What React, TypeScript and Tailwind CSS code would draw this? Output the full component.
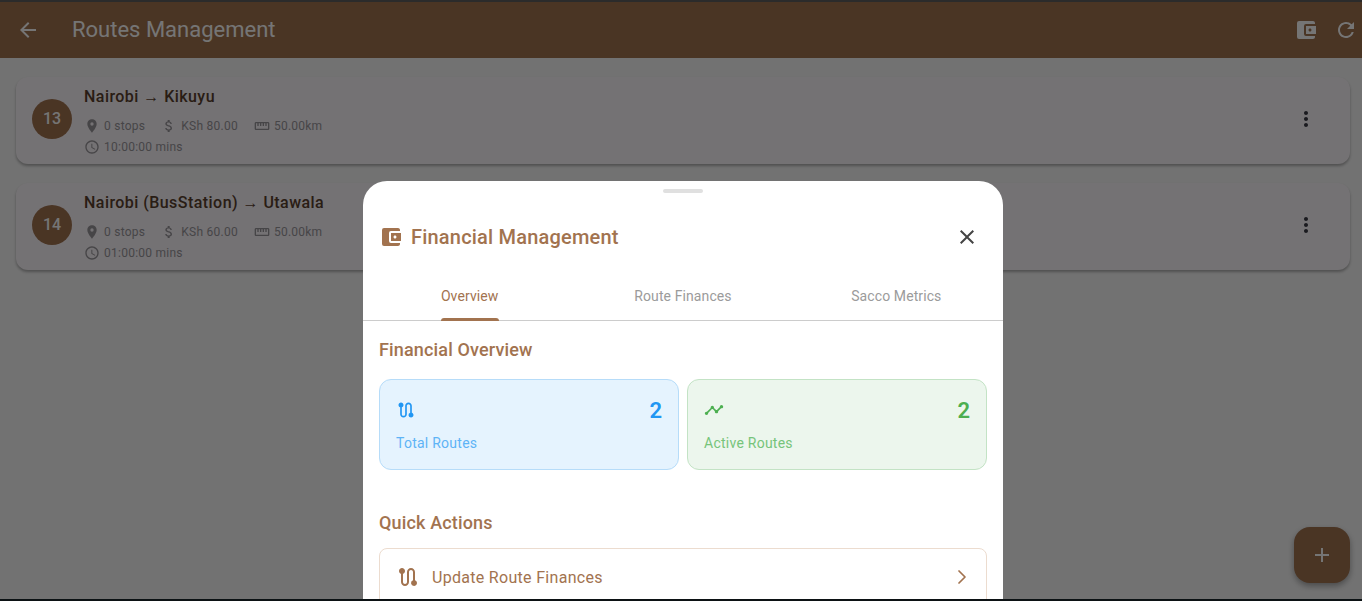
import { ChevronRight } from "lucide-react";
import {
  MdAccessTime,
  MdAccountBalanceWallet,
  MdAdd,
  MdArrowBack,
  MdAttachMoney,
  MdClose,
  MdMoreVert,
  MdPlace,
  MdRefresh,
  MdRoute,
  MdStraighten,
  MdTimeline,
} from "react-icons/md";

const routes = [
  { id: 13, from: "Nairobi", to: "Kikuyu", fare: "KSh 80.00", time: "10:00:00 mins" },
  { id: 14, from: "Nairobi (BusStation)", to: "Utawala", fare: "KSh 60.00", time: "01:00:00 mins" },
];

const RouteCard = ({ route }: { route: (typeof routes)[number] }) => (
  <div className="flex h-[87px] items-center rounded-xl bg-[#fdf8fc] pl-4 pr-[32px] shadow-[0_2px_3px_rgba(0,0,0,0.3)]">
    <div className="mb-1 flex h-10 w-10 shrink-0 items-center justify-center rounded-full bg-[#a2734f] text-base font-medium text-white">
      {route.id}
    </div>
    <div className="ml-3 flex-1">
      <div className="text-base leading-5 font-medium tracking-[0.45px] text-[#5a3f2e]">
        {route.from} <span className="font-['Liberation_Sans',sans-serif] font-normal">→</span> {route.to}
      </div>
      <div className="mt-[11px] flex items-center gap-4 text-xs leading-[16px] tracking-[0.25px] text-[#9a979c]">
        <span className="flex items-center gap-1"><MdPlace size={16} />0 stops</span>
        <span className="flex items-center gap-1"><MdAttachMoney size={16} />{route.fare}</span>
        <span className="flex items-center gap-1"><MdStraighten size={16} />50.00km</span>
      </div>
      <div className="mt-[5px] flex items-center gap-1 text-xs leading-[16px] tracking-[0.25px] text-[#9a979c]">
        <MdAccessTime size={16} />{route.time}
      </div>
    </div>
    <MdMoreVert size={24} className="mb-1 text-[#3a3a44]" />
  </div>
);

const StatCard = ({ wrap, icon, value, label, labelColor, valueColor }: {
  wrap: string; icon: React.ReactNode; value: string; label: string; labelColor: string; valueColor: string;
}) => (
  <div className={`flex h-[91px] flex-1 flex-col rounded-xl border px-4 pt-[15px] ${wrap}`}>
    <div className="flex h-[30px] items-center justify-between">
      {icon}
      <span className={`text-[22px] font-semibold ${valueColor}`}>{value}</span>
    </div>
    <div className={`mt-[8px] text-sm leading-5 tracking-[0.25px] ${labelColor}`}>{label}</div>
  </div>
);

export default function App() {
  return (
    <div className="relative h-[601px] w-[1362px] overflow-hidden bg-[#f9f9f9] font-['Roboto',sans-serif]">
      {/* app bar */}
      <header className="flex h-[58px] items-center bg-[#a2734f] pl-4 pr-[4px] pt-[2px] text-white">
        <MdArrowBack size={24} />
        <h1 className="mb-[2px] ml-8 flex-1 text-[22px] font-normal">Routes Management</h1>
        <MdAccountBalanceWallet size={24} />
        <MdRefresh size={24} className="ml-4" />
      </header>

      <main className="flex flex-col gap-[19px] pl-4 pr-3 pt-[19px]">
        {routes.map((r) => <RouteCard key={r.id} route={r} />)}
      </main>

      <button className="absolute left-[1294px] top-[527px] flex h-14 w-14 items-center justify-center rounded-2xl bg-[#a2734f] text-white shadow-[0_3px_6px_rgba(0,0,0,0.35)]">
        <MdAdd size={24} />
      </button>

      {/* scrim */}
      <div className="absolute inset-0 bg-black/[.54]" />

      {/* bottom sheet */}
      <section className="absolute left-[363px] top-[181px] bottom-0 w-[640px] rounded-t-[24px] bg-white">
        <div className="mx-auto mt-2 h-1 w-10 rounded-full bg-[#e0e0e0]" />
        <div className="mt-1 flex h-[70px] items-center pl-4 pr-6 pt-[10px] text-[#a2734f]">
          <MdAccountBalanceWallet size={24} />
          <h2 className="ml-2 flex-1 text-[20px] font-medium tracking-[0.2px]">Financial Management</h2>
          <MdClose size={24} className="text-[#444444]" />
        </div>
        <nav className="mt-[5px] flex h-[49px] border-b border-[#cccccc] text-sm tracking-[0.1px]">
          <div className="flex flex-1 justify-center pt-[14px]">
            <span className="relative h-[35px] text-[#a2734f]">
              Overview
              <span className="absolute bottom-0 left-0 -right-px h-[3px] rounded-t-[3px] bg-[#a2734f]" />
            </span>
          </div>
          <div className="flex flex-1 justify-center pt-[14px] text-[#9b9b9b]">Route Finances</div>
          <div className="flex flex-1 justify-center pt-[14px] text-[#9b9b9b]">Sacco Metrics</div>
        </nav>

        <div className="px-4">
          <h3 className="mt-[18px] text-lg leading-[22px] font-medium tracking-[0.15px] text-[#a2734f]">Financial Overview</h3>
          <div className="mt-[18px] flex gap-2">
            <StatCard
              wrap="border-[#b6dcf9] bg-[#e5f3fe]"
              icon={<MdRoute size={20} className="text-[#2196f3]" />}
              value="2"
              valueColor="text-[#2196f3]"
              label="Total Routes"
              labelColor="text-[#5eb3f6]"
            />
            <StatCard
              wrap="border-[#c3e3c5] bg-[#ecf6ed]"
              icon={<MdTimeline size={20} className="text-[#4caf50]" />}
              value="2"
              valueColor="text-[#4caf50]"
              label="Active Routes"
              labelColor="text-[#76c47a]"
            />
          </div>
          <h3 className="mt-[42px] text-lg leading-[22px] font-medium tracking-[0.15px] text-[#a2734f]">Quick Actions</h3>
          <div className="mt-[14px] flex h-[60px] items-start rounded-lg border border-[#ecdccf] pl-4 pr-3 pt-[16px] text-[#a2734f]">
            <MdRoute size={24} />
            <span className="ml-3 flex-1 pt-[1px] text-base leading-6 tracking-[0.3px]">Update Route Finances</span>
            <ChevronRight size={24} strokeWidth={1.75} />
          </div>
        </div>
      </section>

      {/* window edges */}
      <div className="absolute inset-x-0 top-0 h-[2px] bg-[#2b2b2b]" />
      <div className="absolute inset-x-0 bottom-0 h-[2px] bg-[#0c1214]" />
    </div>
  );
}
